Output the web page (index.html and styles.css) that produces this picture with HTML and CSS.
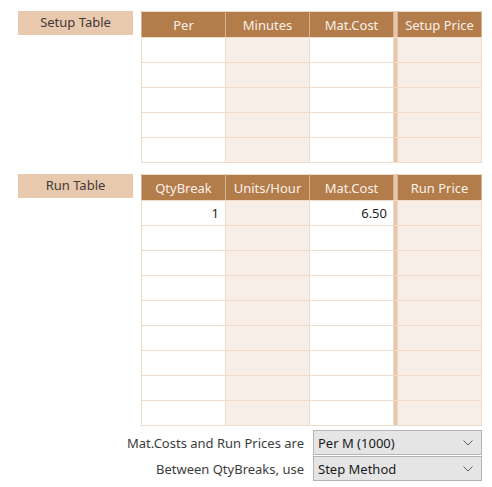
FILE: index.html
```html
<!DOCTYPE html>
<html>
<head>
<meta charset="utf-8">
<link rel="stylesheet" href="styles.css">
</head>
<body>
<div class="page">
  <section class="block setup">
    <div class="label">Setup Table</div>
    <table class="grid">
      <colgroup><col class="c1"><col class="c2"><col class="c3"><col class="sep"><col class="c4"></colgroup>
      <thead><tr><th>Per</th><th>Minutes</th><th>Mat.Cost</th><th class="sepc"></th><th>Setup Price</th></tr></thead>
      <tbody>
        <tr><td class="w"></td><td class="s"></td><td class="w"></td><td class="sepc"></td><td class="s"></td></tr>
        <tr><td class="w"></td><td class="s"></td><td class="w"></td><td class="sepc"></td><td class="s"></td></tr>
        <tr><td class="w"></td><td class="s"></td><td class="w"></td><td class="sepc"></td><td class="s"></td></tr>
        <tr><td class="w"></td><td class="s"></td><td class="w"></td><td class="sepc"></td><td class="s"></td></tr>
        <tr><td class="w"></td><td class="s"></td><td class="w"></td><td class="sepc"></td><td class="s"></td></tr>
      </tbody>
    </table>
  </section>

  <section class="block run">
    <div class="label">Run Table</div>
    <table class="grid">
      <colgroup><col class="c1"><col class="c2"><col class="c3"><col class="sep"><col class="c4"></colgroup>
      <thead><tr><th>QtyBreak</th><th>Units/Hour</th><th>Mat.Cost</th><th class="sepc"></th><th>Run Price</th></tr></thead>
      <tbody>
        <tr><td class="w num">1</td><td class="s"></td><td class="w num">6.50</td><td class="sepc"></td><td class="s"></td></tr>
        <tr><td class="w"></td><td class="s"></td><td class="w"></td><td class="sepc"></td><td class="s"></td></tr>
        <tr><td class="w"></td><td class="s"></td><td class="w"></td><td class="sepc"></td><td class="s"></td></tr>
        <tr><td class="w"></td><td class="s"></td><td class="w"></td><td class="sepc"></td><td class="s"></td></tr>
        <tr><td class="w"></td><td class="s"></td><td class="w"></td><td class="sepc"></td><td class="s"></td></tr>
        <tr><td class="w"></td><td class="s"></td><td class="w"></td><td class="sepc"></td><td class="s"></td></tr>
        <tr><td class="w"></td><td class="s"></td><td class="w"></td><td class="sepc"></td><td class="s"></td></tr>
        <tr><td class="w"></td><td class="s"></td><td class="w"></td><td class="sepc"></td><td class="s"></td></tr>
        <tr><td class="w"></td><td class="s"></td><td class="w"></td><td class="sepc"></td><td class="s"></td></tr>
      </tbody>
    </table>
  </section>

  <div class="options">
    <div class="opt">
      <span class="optlabel">Mat.Costs and Run Prices are</span>
      <div class="combo"><span>Per M (1000)</span>
        <svg class="chev" width="10" height="6" viewBox="0 0 10 6"><path d="M0.5 0.5 L5 5 L9.5 0.5" fill="none" stroke="#606060" stroke-width="1"/></svg>
      </div>
    </div>
    <div class="opt">
      <span class="optlabel">Between QtyBreaks, use</span>
      <div class="combo"><span>Step Method</span>
        <svg class="chev" width="10" height="6" viewBox="0 0 10 6"><path d="M0.5 0.5 L5 5 L9.5 0.5" fill="none" stroke="#606060" stroke-width="1"/></svg>
      </div>
    </div>
  </div>
</div>
</body>
</html>
```

FILE: styles.css
```css
html, body {
  margin: 0;
  padding: 0;
  background: #ffffff;
}
body {
  font-family: "Noto Sans", "Open Sans", sans-serif;
  font-size: 13px;
  color: #3c3c3c;
}
.page {
  padding: 11px 0 0 18px;
  width: 464px;
}
.block {
  display: flex;
  align-items: flex-start;
  gap: 8px;
}
.run {
  margin-top: 11px;
}
.label {
  width: 115px;
  height: 24px;
  line-height: 23px;
  background: #e9c9ae;
  color: #3f3a36;
  text-align: center;
}
.grid {
  border-collapse: collapse;
  table-layout: fixed;
  width: 341px;
  border: 1px solid #f0dcca;
}
.c1, .c2, .c3 { width: 84px; }
.sep { width: 4px; }
.c4 { width: 84px; }
.grid th {
  height: 25px;
  padding: 0;
  background: #b37c4b;
  color: #fbf1e8;
  font-weight: normal;
  text-align: center;
  border-left: 1px solid #d9b291;
  border-right: 1px solid #d9b291;
  border-bottom: 1px solid #f0dcca;
  line-height: 24px;
  white-space: nowrap;
}
.grid td {
  height: 24px;
  padding: 0 6px;
  border: 1px solid #f0dcca;
  color: #1e1e1e;
}
.grid td.w { background: #ffffff; }
.grid td.s { background: #f8eee8; }
.grid .sepc {
  background: #e8c6ab;
  padding: 0;
  border-left: none;
  border-right: none;
}
.grid th.sepc {
  background: #e8c6ab;
  border: none;
}
.grid td.num { text-align: right; }
.options {
  margin-top: 4px;
  display: flex;
  flex-direction: column;
  gap: 1px;
}
.opt {
  display: flex;
  align-items: center;
  justify-content: flex-end;
  gap: 9px;
}
.optlabel {
  color: #3c3c3c;
}
.combo {
  border: 1px solid #b4b4b4;
  background: #e5e5e5;
  display: flex;
  align-items: center;
  justify-content: space-between;
  padding: 0 8px 0 4px;
  box-sizing: border-box;
  width: 169px;
  height: 25px;
  color: #1a1a1a;
}
.chev { display: block; }
```
